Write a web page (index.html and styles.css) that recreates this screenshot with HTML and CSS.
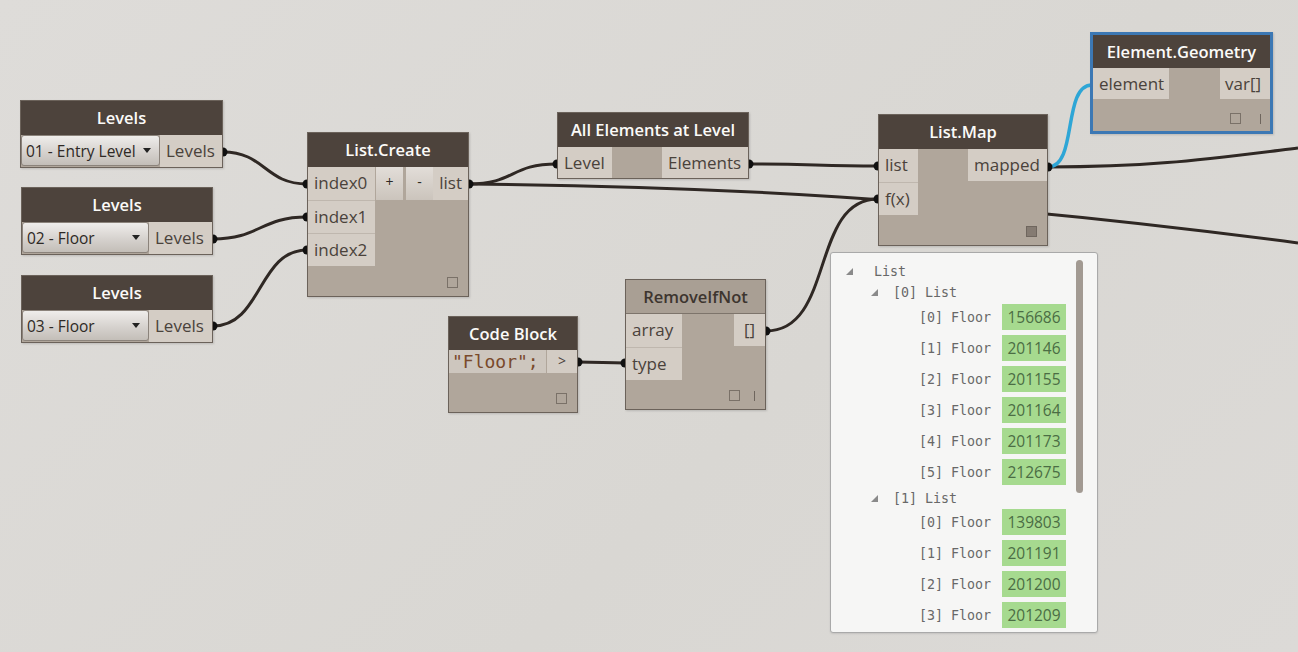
FILE: index.html
```html
<!DOCTYPE html>
<html lang="en">
<head>
    <meta charset="UTF-8">
    <title>Dynamo Graph</title>
    <link rel="stylesheet" href="styles.css">
</head>
<body>
    <div class="canvas">

        <!-- Wires (behind the nodes) -->
        <svg class="wires" width="1298" height="652" viewBox="0 0 1298 652">
            <g class="wire">
                <path d="M223 152 C265 152 265 184 307 184"/>
                <path d="M213 239 C260 239 260 217 307 217"/>
                <path d="M213 326 C262 326 258 250 307 250"/>
                <path d="M469 184 C515 184 510 164 557 164"/>
                <path d="M469 184 C700 186 950 197 1298 243"/>
                <path d="M749 164 C810 164 820 166 878 166"/>
                <path d="M578 362 C600 362 605 363 625 363"/>
                <path d="M766 331 C835 331 810 199 878 199"/>
                <path d="M1048 167 C1150 167 1200 160 1298 148"/>
            </g>
            <path class="wire-active" d="M1048 167 C1078 167 1062 85 1092 85"/>
            <g class="dots">
                <circle cx="223" cy="152" r="4.5"/>
                <circle cx="213" cy="239" r="4.5"/>
                <circle cx="213" cy="326" r="4.5"/>
                <circle cx="307" cy="184" r="4.5"/>
                <circle cx="307" cy="217" r="4.5"/>
                <circle cx="307" cy="250" r="4.5"/>
                <circle cx="469" cy="184" r="4.5"/>
                <circle cx="557" cy="164" r="4.5"/>
                <circle cx="749" cy="164" r="4.5"/>
                <circle cx="878" cy="166" r="4.5"/>
                <circle cx="878" cy="199" r="4.5"/>
                <circle cx="1048" cy="167" r="4.5"/>
                <circle cx="578" cy="362" r="4.5"/>
                <circle cx="625" cy="363" r="4.5"/>
                <circle cx="766" cy="331" r="4.5"/>
            </g>
        </svg>

        <!-- Levels nodes -->
        <div class="node levels levels-1">
            <div class="node-head">Levels</div>
            <div class="node-row">
                <div class="dropdown"><span>01 - Entry Level</span><i class="caret"></i></div>
                <div class="port">Levels</div>
            </div>
        </div>

        <div class="node levels levels-2">
            <div class="node-head">Levels</div>
            <div class="node-row">
                <div class="dropdown"><span>02 - Floor</span><i class="caret"></i></div>
                <div class="port">Levels</div>
            </div>
        </div>

        <div class="node levels levels-3">
            <div class="node-head">Levels</div>
            <div class="node-row">
                <div class="dropdown"><span>03 - Floor</span><i class="caret"></i></div>
                <div class="port">Levels</div>
            </div>
        </div>

        <!-- List.Create -->
        <div class="node list-create">
            <div class="node-head">List.Create</div>
            <div class="node-main">
                <div class="inputs">
                    <div class="port">index0</div>
                    <div class="port">index1</div>
                    <div class="port">index2</div>
                </div>
                <div class="btns">
                    <span class="btn">+</span>
                    <span class="btn">-</span>
                </div>
                <div class="outputs">
                    <div class="port">list</div>
                </div>
            </div>
            <div class="node-foot"><i class="chk"></i></div>
        </div>

        <!-- All Elements at Level -->
        <div class="node all-elements">
            <div class="node-head">All Elements at Level</div>
            <div class="node-main">
                <div class="inputs"><div class="port">Level</div></div>
                <div class="spacer"></div>
                <div class="outputs"><div class="port">Elements</div></div>
            </div>
        </div>

        <!-- List.Map -->
        <div class="node list-map">
            <div class="node-head">List.Map</div>
            <div class="node-main">
                <div class="inputs">
                    <div class="port">list</div>
                    <div class="port">f(x)</div>
                </div>
                <div class="spacer"></div>
                <div class="outputs"><div class="port">mapped</div></div>
            </div>
            <div class="node-foot"><i class="chk filled"></i></div>
        </div>

        <!-- Element.Geometry (selected) -->
        <div class="node geometry">
            <div class="node-head">Element.Geometry</div>
            <div class="node-main">
                <div class="inputs"><div class="port">element</div></div>
                <div class="spacer"></div>
                <div class="outputs"><div class="port">var[]</div></div>
            </div>
            <div class="node-foot"><i class="chk"></i><i class="bar"></i></div>
        </div>

        <!-- Code Block -->
        <div class="node code-block">
            <div class="node-head">Code Block</div>
            <div class="code-line">
                <div class="code">"Floor";</div>
                <div class="code-out">&gt;</div>
            </div>
            <div class="node-foot"><i class="chk"></i></div>
        </div>

        <!-- RemoveIfNot -->
        <div class="node remove-if-not">
            <div class="node-head">RemoveIfNot</div>
            <div class="node-main">
                <div class="inputs">
                    <div class="port">array</div>
                    <div class="port">type</div>
                </div>
                <div class="spacer"></div>
                <div class="outputs"><div class="port">[]</div></div>
            </div>
            <div class="node-foot"><i class="chk"></i><i class="bar"></i></div>
        </div>

        <!-- Watch preview -->
        <div class="watch">
            <div class="tree-row lvl0"><i class="tri"></i><span>List</span></div>
            <div class="tree-row lvl1"><i class="tri"></i><span>[0] List</span></div>
            <div class="item"><span>[0] Floor</span><b>156686</b></div>
            <div class="item"><span>[1] Floor</span><b>201146</b></div>
            <div class="item"><span>[2] Floor</span><b>201155</b></div>
            <div class="item"><span>[3] Floor</span><b>201164</b></div>
            <div class="item"><span>[4] Floor</span><b>201173</b></div>
            <div class="item"><span>[5] Floor</span><b>212675</b></div>
            <div class="tree-row lvl1 short"><i class="tri"></i><span>[1] List</span></div>
            <div class="item"><span>[0] Floor</span><b>139803</b></div>
            <div class="item"><span>[1] Floor</span><b>201191</b></div>
            <div class="item"><span>[2] Floor</span><b>201200</b></div>
            <div class="item"><span>[3] Floor</span><b>201209</b></div>
            <div class="scrollbar"></div>
        </div>

    </div>
</body>
</html>
```

FILE: styles.css
```css
/* General */
body {
    margin: 0;
    font-family: 'Open Sans', 'DejaVu Sans', sans-serif;
    background-color: #dcdad6;
}

.canvas {
    position: relative;
    width: 1298px;
    height: 652px;
    overflow: hidden;
    background: linear-gradient(135deg, #dedcd9 0%, #d9d7d3 60%, #dcdad7 100%);
}

/* Wires */
.wires {
    position: absolute;
    left: 0;
    top: 0;
}

.wire path {
    fill: none;
    stroke: #2f2824;
    stroke-width: 3;
}

.wire-active {
    fill: none;
    stroke: #2ea6d6;
    stroke-width: 3.5;
}

.dots circle {
    fill: #111;
}

/* Nodes */
.node {
    position: absolute;
    box-sizing: border-box;
    display: flex;
    flex-direction: column;
    background-color: #b0a69b;
    border: 1px solid #6b625a;
    box-shadow: 1px 1px 2px rgba(0, 0, 0, 0.15);
}

.node-head {
    height: 34px;
    line-height: 34px;
    flex-shrink: 0;
    background-color: #4d433c;
    color: #fbfaf8;
    font-size: 16.5px;
    font-weight: 600;
    text-align: center;
    white-space: nowrap;
}

.node-main {
    display: flex;
}

.node-row {
    display: flex;
    height: 32px;
}

.inputs,
.outputs {
    display: flex;
    flex-direction: column;
}

.spacer {
    flex: 1;
}

.port {
    box-sizing: border-box;
    height: 33px;
    line-height: 32px;
    padding: 0 6px;
    background-color: #d4cdc5;
    color: #4a423b;
    font-size: 17px;
    white-space: nowrap;
}

.inputs .port + .port {
    border-top: 1px solid #bfb7ae;
}

.node-foot {
    margin-top: auto;
    display: flex;
    justify-content: flex-end;
    align-items: center;
    gap: 14px;
    padding: 0 10px 8px 0;
}

.chk {
    box-sizing: border-box;
    width: 11px;
    height: 11px;
    border: 1px solid #7a7168;
}

.chk.filled {
    background-color: #857b72;
    border-color: #6f665e;
}

.bar {
    width: 1px;
    height: 10px;
    background-color: #6e655d;
}

/* Levels */
.levels .port {
    flex: 1;
    height: 32px;
    padding: 0 6px;
}

.dropdown {
    box-sizing: border-box;
    display: flex;
    align-items: center;
    justify-content: space-between;
    height: 31px;
    padding: 0 8px 0 4px;
    border: 1px solid #8b837b;
    border-radius: 3px;
    background: linear-gradient(#efedeb, #d6d2ce 55%, #c3beb8);
    color: #2e2925;
    font-size: 15.5px;
    white-space: nowrap;
}

.caret {
    width: 0;
    height: 0;
    border-left: 4px solid transparent;
    border-right: 4px solid transparent;
    border-top: 5px solid #222;
}

.levels-1 {
    left: 20px;
    top: 100px;
    width: 203px;
}

.levels-1 .dropdown {
    width: 139px;
}

.levels-2 {
    left: 21px;
    top: 187px;
    width: 192px;
}

.levels-3 {
    left: 21px;
    top: 275px;
    width: 192px;
}

.levels-2 .dropdown,
.levels-3 .dropdown {
    width: 127px;
}

/* List.Create */
.list-create {
    left: 307px;
    top: 132px;
    width: 162px;
    height: 165px;
}

.list-create .inputs .port {
    width: 67px;
}

.btns {
    display: flex;
    gap: 3px;
    padding-left: 1px;
    flex: 1;
}

.btn {
    width: 27px;
    height: 33px;
    line-height: 30px;
    text-align: center;
    background: linear-gradient(#e2ddd8, #cbc4bc);
    color: #2e2925;
    font-size: 14px;
}

/* All Elements at Level */
.all-elements {
    left: 557px;
    top: 112px;
    width: 192px;
    height: 67px;
}

.all-elements .port {
    height: 31px;
    line-height: 31px;
}

.all-elements .inputs .port {
    width: 54px;
}

.all-elements .outputs .port {
    width: 86px;
}

/* List.Map */
.list-map {
    left: 878px;
    top: 114px;
    width: 170px;
    height: 132px;
}

.list-map .inputs .port {
    width: 39px;
}

.list-map .outputs .port {
    width: 79px;
    height: 32px;
}

/* Element.Geometry */
.geometry {
    left: 1090px;
    top: 32px;
    width: 183px;
    height: 102px;
    border: 3px solid #3c78b4;
}

.geometry .node-head {
    height: 33px;
    line-height: 33px;
}

.geometry .port {
    height: 31px;
    line-height: 31px;
}

.geometry .inputs .port {
    width: 76px;
}

.geometry .outputs .port {
    width: 50px;
    padding: 0 5px;
}

.geometry .node-foot {
    padding: 0 9px 7px 0;
    gap: 19px;
}

/* Code Block */
.code-block {
    left: 448px;
    top: 316px;
    width: 130px;
    height: 97px;
}

.code-block .node-head {
    height: 33px;
    line-height: 33px;
}

.code-line {
    display: flex;
    height: 23px;
}

.code {
    width: 97px;
    padding-left: 3px;
    box-sizing: border-box;
    background-color: #cdc6be;
    color: #7a4a2c;
    font-family: 'DejaVu Sans Mono', monospace;
    font-size: 18px;
    line-height: 23px;
    white-space: nowrap;
}

.code-out {
    flex: 1;
    margin-left: 1px;
    background-color: #d3ccc4;
    color: #4a423b;
    font-size: 14px;
    line-height: 22px;
    text-align: center;
}

/* RemoveIfNot */
.remove-if-not {
    left: 625px;
    top: 279px;
    width: 141px;
    height: 131px;
}

.remove-if-not .node-head {
    background-color: #a99f94;
    color: #3d352f;
    border-bottom: 1px solid #7d746b;
    height: 33px;
    line-height: 33px;
}

.remove-if-not .inputs .port {
    width: 56px;
}

.remove-if-not .outputs .port {
    width: 31px;
    height: 32px;
    padding: 0;
    text-align: center;
}

/* Watch preview */
.watch {
    position: absolute;
    left: 830px;
    top: 252px;
    width: 268px;
    height: 381px;
    box-sizing: border-box;
    padding-top: 8px;
    background-color: #f6f6f5;
    border: 1px solid #a9a9a9;
    border-radius: 3px;
    box-shadow: 0 1px 2px rgba(0, 0, 0, 0.1);
    font-family: 'DejaVu Sans Mono', monospace;
    font-size: 13.3px;
    color: #686868;
}

.tree-row {
    display: flex;
    align-items: center;
    height: 21px;
}

.tree-row.short {
    height: 19px;
}

.tri {
    width: 0;
    height: 0;
    border-left: 7px solid transparent;
    border-bottom: 7px solid #8a8a8a;
    margin-right: 15px;
}

.lvl0 {
    padding-left: 15px;
}

.lvl0 .tri {
    margin-right: 21px;
}

.lvl1 {
    padding-left: 40px;
}

.item {
    display: flex;
    align-items: flex-start;
    height: 31px;
    padding-left: 88px;
}

.item span {
    width: 83px;
    line-height: 27px;
    margin-top: 1px;
}

.item b {
    width: 64px;
    height: 26px;
    margin-top: 1px;
    background-color: #a6da8f;
    color: #4b6d44;
    font-family: 'Open Sans', sans-serif;
    font-size: 15.5px;
    font-weight: normal;
    line-height: 26px;
    text-align: center;
}

.scrollbar {
    position: absolute;
    left: 245px;
    top: 7px;
    width: 7px;
    height: 233px;
    border-radius: 4px;
    background-color: #a29a92;
}
```
